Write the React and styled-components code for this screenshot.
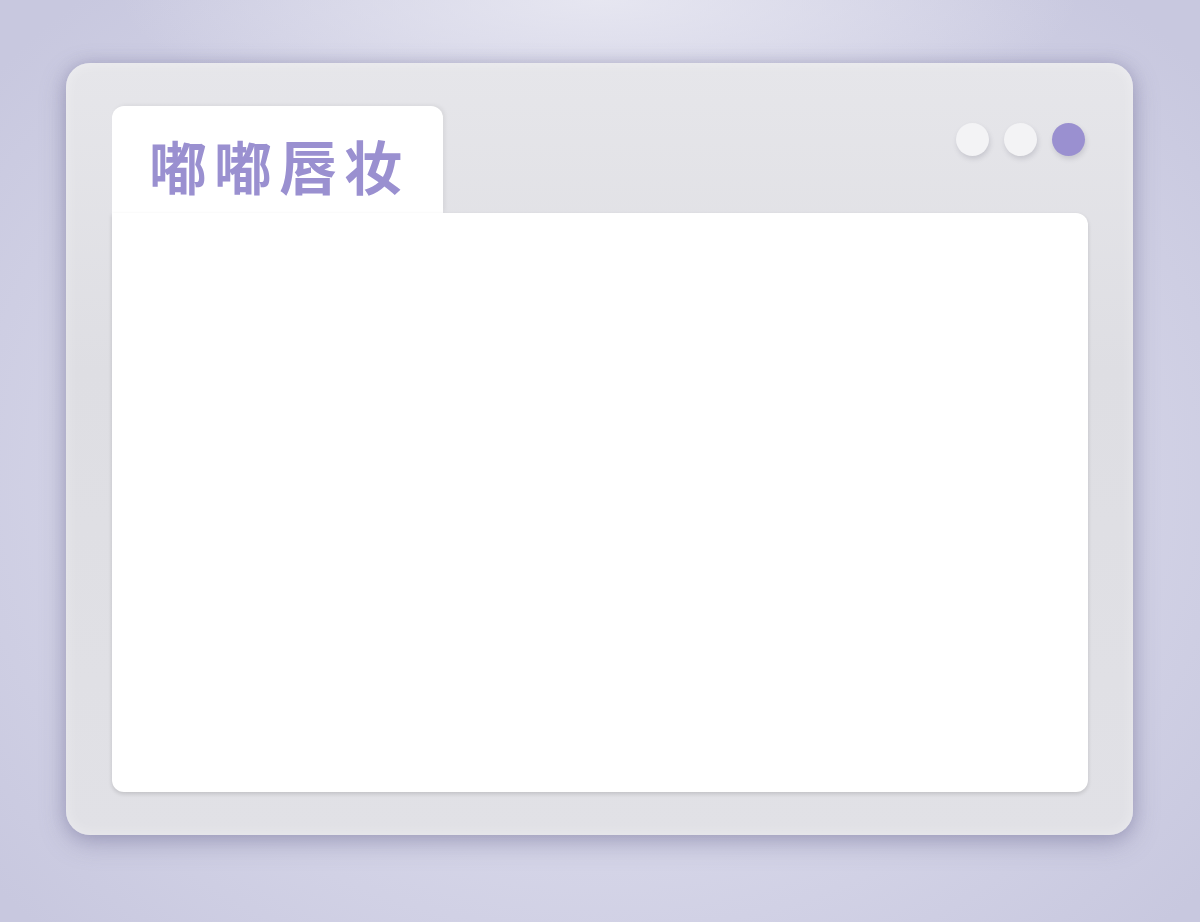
import React from "react";
import styled, { createGlobalStyle } from "styled-components";

const GlobalStyle = createGlobalStyle`
    html, body {
        margin: 0;
        padding: 0;
    }
    body {
        font-family: "Noto Sans CJK SC", "Noto Sans", sans-serif;
    }
`;

const Page = styled.div`
    width: 1200px;
    height: 922px;
    box-sizing: border-box;
    padding: 63px 67px 87px 66px;
    background:
        radial-gradient(ellipse 40% 14% at 50% 0%, rgba(236, 236, 244, 0.8) 0%, rgba(236, 236, 244, 0) 100%),
        radial-gradient(ellipse 65% 70% at 50% 52%, #dcdcec 0%, #d4d4e7 60%, #c8c8df 100%);
    overflow: hidden;
`;

const Window = styled.div`
    height: 772px;
    box-sizing: border-box;
    padding: 43px 45px 43px 46px;
    display: flex;
    flex-direction: column;
    border-radius: 24px;
    background: linear-gradient(180deg, #e6e6ea 0%, #dedee3 40%, #e1e1e6 100%);
    box-shadow:
        0 8px 26px rgba(100, 98, 140, 0.38),
        0 0 14px rgba(110, 108, 150, 0.25),
        inset 0 0 14px rgba(255, 255, 255, 0.35);
`;

const Header = styled.div`
    display: flex;
    justify-content: space-between;
    align-items: flex-start;
`;

const Tab = styled.div`
    width: 331px;
    height: 107px;
    box-sizing: border-box;
    padding-top: 26px;
    padding-left: 37px;
    background: #ffffff;
    border-radius: 12px 12px 0 0;
    box-shadow: 2px -1px 4px rgba(0, 0, 0, 0.06);
    color: #9a90d0;
    font-family: "Noto Sans CJK SC", sans-serif;
    font-weight: 700;
    font-size: 58px;
    line-height: 66px;
    letter-spacing: 7px;
    white-space: nowrap;
`;

const Dots = styled.div`
    display: flex;
    gap: 15px;
    padding-top: 17px;
    padding-right: 3px;
`;

const Dot = styled.span`
    width: 33px;
    height: 33px;
    border-radius: 50%;
    background: ${({ $active }) => ($active ? "#9a90d0" : "#f3f3f5")};
    box-shadow: 1px 3px 5px rgba(90, 90, 110, 0.2);
`;

const Panel = styled.div`
    flex: 1;
    background: #ffffff;
    border-radius: 0 12px 12px 12px;
    box-shadow: 0 2px 4px rgba(0, 0, 0, 0.14);
`;

const App = () => {
    return (
        <>
            <GlobalStyle />
            <Page>
                <Window>
                    <Header>
                        <Tab>嘟嘟唇妆</Tab>
                        <Dots>
                            <Dot />
                            <Dot />
                            <Dot $active />
                        </Dots>
                    </Header>
                    <Panel />
                </Window>
            </Page>
        </>
    );
};

export default App;
